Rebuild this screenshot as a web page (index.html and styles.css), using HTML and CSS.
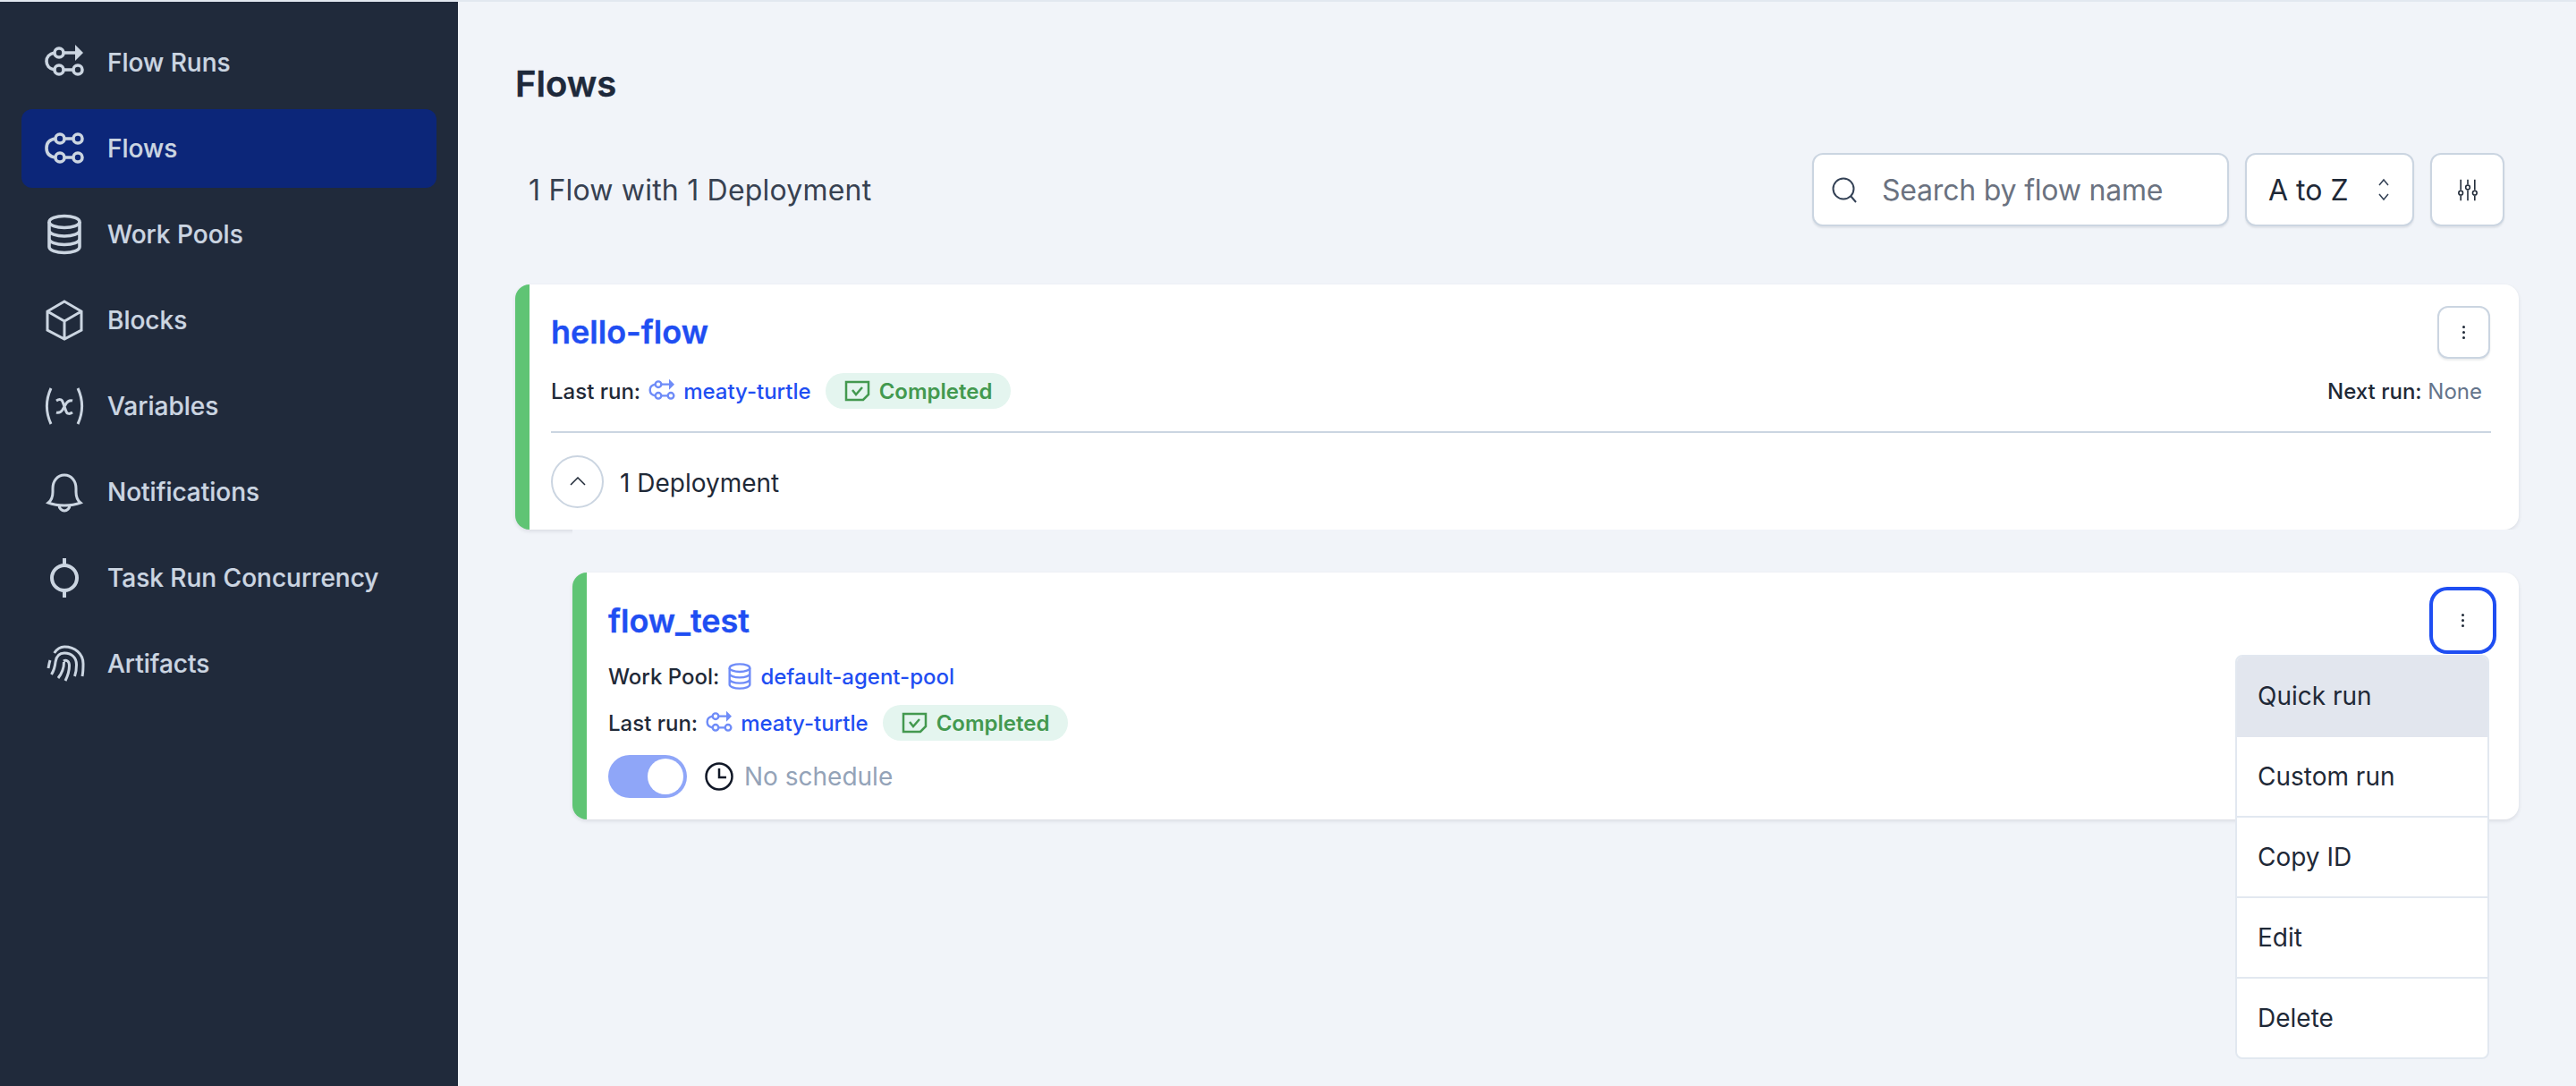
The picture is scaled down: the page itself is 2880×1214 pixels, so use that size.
FILE: index.html
```html
<!DOCTYPE html>
<html lang="en">
<head>
    <meta charset="UTF-8">
    <meta name="viewport" content="width=device-width, initial-scale=1.0">
    <title>Flows</title>
    <link rel="stylesheet" href="styles.css">
</head>
<body>
    <svg class="defs" width="0" height="0">
        <symbol id="i-flow-run" viewBox="0 0 48 48">
            <circle cx="18" cy="13" r="5"/><circle cx="18" cy="32" r="5"/><circle cx="39" cy="32" r="5"/>
            <path d="M23 32h11M23 13h15M13 13C7 14 4 18 4 22.500C4 27 7 31 13 32"/>
            <path class="solid" d="M36 4l9 9-9 9z"/>
        </symbol>
        <symbol id="i-flow" viewBox="0 0 48 48">
            <circle cx="19" cy="13" r="5"/><circle cx="39" cy="13" r="5"/><circle cx="19" cy="34" r="5"/><circle cx="39" cy="34" r="5"/>
            <path d="M24 13h10M24 34h10M14 13C7 14 4 18 4 23.500C4 29 7 33 14 34"/>
        </symbol>
        <symbol id="i-pool" viewBox="0 0 48 48">
            <ellipse cx="24" cy="10" rx="17" ry="6.500"/>
            <path d="M7 10v28c0 3.600 7.600 6.500 17 6.500s17-2.900 17-6.500V10M7 19.500c0 3.600 7.600 6.500 17 6.500s17-2.900 17-6.500M7 29c0 3.600 7.600 6.500 17 6.500s17-2.900 17-6.500"/>
        </symbol>
    </svg>

    <div class="app">
        <aside class="sidebar">
            <a class="nav-item"><svg class="nav-icon"><use href="#i-flow-run"/></svg>Flow Runs</a>
            <a class="nav-item active"><svg class="nav-icon"><use href="#i-flow"/></svg>Flows</a>
            <a class="nav-item"><svg class="nav-icon"><use href="#i-pool"/></svg>Work Pools</a>
            <a class="nav-item">
                <svg class="nav-icon" viewBox="0 0 48 48"><path d="M24 3l19 11v21L24 45 5 35V14zM5 14l19 11 19-11M24 25v20"/></svg>Blocks
            </a>
            <a class="nav-item">
                <svg class="nav-icon" viewBox="0 0 48 48"><path d="M9 4C3 17 3 31 9 44M39 4c6 13 6 27 0 40M15 18c3-2 6-2 7 1l4 11c1 3 4 3 7 1M33 18c-3-1-5 0-7 3l-4 7c-2 3-4 4-7 3"/></svg>Variables
            </a>
            <a class="nav-item">
                <svg class="nav-icon" viewBox="0 0 48 48"><path d="M6 36c4-3 5-7 5-12v-4c0-8 5-15 13-15s13 7 13 15v4c0 5 1 9 5 12-5 2-11 3-18 3s-13-1-18-3zM18 39c0 3 3 6 6 6s6-3 6-6"/></svg>Notifications
            </a>
            <a class="nav-item">
                <svg class="nav-icon" viewBox="0 0 48 48"><circle class="thick" cx="24" cy="24" r="14"/><path class="thick" d="M24 2v8M24 38v8"/></svg>Task Run Concurrency
            </a>
            <a class="nav-item">
                <svg class="nav-icon" viewBox="0 0 48 48"><path d="M12.700 12C16 7 20 5 24 5c12 0 21 8 21 19 0 5 0 9-1 14M8 20c-1 3-1.500 6-2 9M9.500 36c2.500-4 4-9 4.500-14 1-7 5-10 10-10 8 0 13.500 5 13.500 13 0 5-.5 9-2 13M17 40c4-5 6.500-10 6.500-18M23 21c3-2 6.500 0 6.500 5 0 6-1.500 11-4.500 17"/></svg>Artifacts
            </a>
        </aside>

        <main class="content">
            <h1 class="page-title">Flows</h1>

            <div class="toolbar">
                <div class="stats">1 Flow with 1 Deployment</div>
                <div class="search">
                    <svg class="search-icon" viewBox="0 0 28 28"><circle cx="13" cy="13" r="11.500"/><path d="M21 21l6 7"/></svg>
                    <span class="search-text">Search by flow name</span>
                </div>
                <div class="sort">
                    A to Z
                    <svg class="sort-icon" viewBox="0 0 16 28"><path d="M3 9l5-6 5 6M3 19l5 6 5-6"/></svg>
                </div>
                <button class="square-btn" type="button">
                    <svg class="filter-icon" viewBox="0 0 28 32"><path d="M4 1v15M4 24v7M14 1v7M14 16v15M24 1v15M24 24v7"/><circle cx="4" cy="20" r="3"/><circle cx="14" cy="12" r="3"/><circle cx="24" cy="20" r="3"/></svg>
                </button>
            </div>

            <section class="card flow-card">
                <div class="card-head">
                    <a class="card-title">hello-flow</a>
                    <button class="kebab" type="button"><span></span><span></span><span></span></button>
                </div>
                <div class="meta-row meta-split">
                    <div class="meta">
                        <span class="label">Last run:</span>
                        <svg class="meta-icon"><use href="#i-flow-run"/></svg>
                        <a class="link">meaty-turtle</a>
                        <span class="state">
                            <svg class="state-icon" viewBox="0 0 29 24"><path d="M2 2h25v14l-6 6H2zM9 11l4 5 7-8"/></svg>Completed
                        </span>
                    </div>
                    <div class="next-run"><span class="label">Next run:</span> <span class="none">None</span></div>
                </div>
                <div class="card-foot">
                    <button class="round-btn" type="button">
                        <svg class="chevron" viewBox="0 0 18 10"><path d="M1 9l8-8 8 8"/></svg>
                    </button>
                    <span class="deploy-count">1 Deployment</span>
                </div>
            </section>

            <div class="deployments">
                <section class="card deploy-card">
                    <div class="card-head deploy-head">
                        <a class="card-title">flow_test</a>
                        <button class="kebab focused" type="button"><span></span><span></span><span></span></button>
                    </div>
                    <div class="meta">
                        <span class="label">Work Pool:</span>
                        <svg class="meta-icon pool-small"><use href="#i-pool"/></svg>
                        <a class="link">default-agent-pool</a>
                    </div>
                    <div class="meta meta-second">
                        <span class="label">Last run:</span>
                        <svg class="meta-icon"><use href="#i-flow-run"/></svg>
                        <a class="link">meaty-turtle</a>
                        <span class="state">
                            <svg class="state-icon" viewBox="0 0 29 24"><path d="M2 2h25v14l-6 6H2zM9 11l4 5 7-8"/></svg>Completed
                        </span>
                    </div>
                    <div class="schedule">
                        <div class="toggle"><div class="knob"></div></div>
                        <svg class="clock" viewBox="0 0 32 32"><circle cx="16" cy="16" r="14.500"/><path d="M16 7v10h8"/></svg>
                        <span class="no-schedule">No schedule</span>
                    </div>

                    <ul class="menu">
                        <li class="menu-item hover">Quick run</li>
                        <li class="menu-item">Custom run</li>
                        <li class="menu-item">Copy ID</li>
                        <li class="menu-item">Edit</li>
                        <li class="menu-item">Delete</li>
                    </ul>
                </section>
            </div>
        </main>
    </div>
</body>
</html>
```
FILE: styles.css
```css
* {
    box-sizing: border-box;
}

html, body {
    height: 100%;
}

body {
    margin: 0;
    border-top: 2px solid #e2e8f0;
    background-color: #f1f4f9;
    color: #1f2937;
    font-family: Inter, 'Liberation Sans', sans-serif;
    overflow: hidden;
}

.defs {
    position: absolute;
}

symbol {
    fill: none;
    stroke: currentColor;
    stroke-width: 3.600;
}

symbol .solid {
    fill: currentColor;
    stroke: none;
}

.app {
    display: flex;
    height: 100%;
}

/* sidebar */
.sidebar {
    width: 512px;
    flex-shrink: 0;
    padding: 24px;
    display: flex;
    flex-direction: column;
    gap: 8px;
    background-color: #202a3b;
}

.nav-item {
    height: 88px;
    padding-left: 24px;
    display: flex;
    align-items: center;
    gap: 24px;
    border-radius: 12px;
    color: #cbd5e1;
    font-size: 28px;
    font-weight: 500;
    -webkit-text-stroke: 0.2px currentColor;
}

.nav-item.active {
    background-color: #0c2679;
}

.nav-icon {
    width: 48px;
    height: 48px;
    flex-shrink: 0;
    fill: none;
    stroke: currentColor;
    stroke-width: 3;
}

.nav-icon .thick {
    stroke-width: 4;
}

/* main */
.content {
    flex: 1;
    padding: 68px 64px 0;
}

.page-title {
    margin: 0;
    font-size: 40px;
    line-height: 48px;
    font-weight: 600;
    color: #1e293b;
    -webkit-text-stroke: 0.4px currentColor;
}

.toolbar {
    margin-top: 53px;
    padding: 0 16px 0 15px;
    display: flex;
    align-items: center;
    gap: 18px;
}

.stats {
    flex: 1;
    font-size: 32px;
    letter-spacing: 0.2px;
    color: #374151;
}

.search, .sort, .square-btn {
    height: 82px;
    display: flex;
    align-items: center;
    background-color: #ffffff;
    border: 2px solid #cbd5e1;
    border-radius: 12px;
    box-shadow: 0 2px 2px rgba(15, 23, 42, 0.08);
}

.search {
    width: 466px;
    padding-left: 20px;
    gap: 28px;
    font-size: 32px;
    color: #6b7280;
}

.search-text {
    letter-spacing: -0.2px;
}

.search-icon {
    width: 28px;
    height: 28px;
    overflow: visible;
    fill: none;
    stroke: #334155;
    stroke-width: 2;
}

.sort {
    width: 189px;
    padding: 0 24px;
    justify-content: space-between;
    font-size: 32px;
    color: #1f2937;
}

.sort-icon {
    width: 16px;
    height: 28px;
    fill: none;
    stroke: #334155;
    stroke-width: 1.500;
}

.square-btn {
    width: 83px;
    padding: 0;
    justify-content: center;
}

.filter-icon {
    width: 22px;
    height: 25px;
    fill: none;
    stroke: #1f2937;
    stroke-width: 2;
}

.card {
    position: relative;
    background-color: #ffffff;
    border-left: 16px solid #5fc474;
    border-radius: 16px;
    box-shadow: 0 2px 4px rgba(15, 23, 42, 0.1);
}

.flow-card {
    margin-top: 65px;
    height: 274px;
    padding: 24px 32px 0 24px;
}

.card-head {
    display: flex;
    justify-content: space-between;
    align-items: flex-start;
}

.card-title {
    margin-top: 7px;
    font-size: 36px;
    line-height: 44px;
    font-weight: 600;
    color: #1f4ef2;
    -webkit-text-stroke: 0.4px currentColor;
}

.kebab {
    width: 59px;
    height: 59px;
    padding: 0;
    display: flex;
    flex-direction: column;
    align-items: center;
    justify-content: center;
    gap: 3px;
    background-color: #ffffff;
    border: 2px solid #cbd5e1;
    border-radius: 12px;
    box-shadow: 0 2px 2px rgba(15, 23, 42, 0.08);
}

.kebab span {
    width: 3px;
    height: 3px;
    border-radius: 50%;
    background-color: #1f2937;
}

.kebab.focused {
    border-color: #ffffff;
    box-shadow: 0 0 0 4px #ffffff, 0 0 0 8px #1f4ef2;
}

.meta-row {
    margin-top: 16px;
}

.meta-split {
    display: flex;
    justify-content: space-between;
    align-items: center;
    padding-right: 10px;
    padding-bottom: 25px;
    border-bottom: 2px solid #cbd5e1;
    margin-right: -1px;
}

.meta {
    display: flex;
    align-items: center;
    height: 40px;
    font-size: 24px;
    font-weight: 500;
}

.label {
    color: #1f2937;
    font-size: 24px;
    font-weight: 500;
}

.meta-icon {
    width: 32px;
    height: 32px;
    margin: 0 8px;
    color: #6f8cf8;
}

.link {
    color: #1f4ef2;
}

.state {
    height: 40px;
    margin-left: 16px;
    padding: 0 21px;
    display: flex;
    align-items: center;
    gap: 10px;
    border-radius: 20px;
    background-color: #e4f5ef;
    color: #43994f;
    font-weight: 600;
}

.state-icon {
    width: 29px;
    height: 24px;
    fill: none;
    stroke: #43994f;
    stroke-width: 2.500;
}

.next-run {
    font-size: 24px;
}

.none {
    color: #64748b;
}

.card-foot {
    margin-top: 25px;
    display: flex;
    align-items: center;
    gap: 18px;
}

.round-btn {
    width: 59px;
    height: 59px;
    padding: 0;
    display: flex;
    align-items: center;
    justify-content: center;
    background-color: #ffffff;
    border: 2px solid #cbd5e1;
    border-radius: 50%;
}

.chevron {
    width: 18px;
    height: 10px;
    margin-top: -2px;
    fill: none;
    stroke: #1f2937;
    stroke-width: 1.500;
}

.deploy-count {
    padding-top: 3px;
    font-size: 28px;
}

/* sits over the bottom of the flow card shadow */
.deployments {
    position: relative;
    margin-left: 64px;
    padding-top: 48px;
    background-color: #f1f4f9;
}

.deploy-card {
    height: 276px;
    padding: 24px 0 0 24px;
}

.deploy-head {
    padding-right: 33px;
    height: 59px;
}

.deploy-card .card-title {
    margin-top: 8px;
}

.deploy-card .meta {
    margin-top: 13px;
}

.deploy-card .meta-second {
    margin-top: 12px;
}

.meta-icon.pool-small {
    margin: 0 7px;
}

.schedule {
    margin-top: 16px;
    display: flex;
    align-items: center;
}

.toggle {
    width: 88px;
    height: 48px;
    padding: 4px;
    display: flex;
    justify-content: flex-end;
    border-radius: 24px;
    background-color: #8fa6f8;
}

.knob {
    width: 40px;
    height: 40px;
    border-radius: 50%;
    background-color: #ffffff;
}

.clock {
    width: 32px;
    height: 32px;
    margin: 0 12px 0 20px;
    fill: none;
    stroke: #111827;
    stroke-width: 2.500;
}

.no-schedule {
    font-size: 28px;
    color: #94a3b8;
}

/* dropdown */
.menu {
    position: absolute;
    top: 92px;
    right: 33px;
    width: 284px;
    margin: 0;
    padding: 0;
    list-style: none;
    overflow: hidden;
    background-color: #ffffff;
    border: 2px solid #e2e8f0;
    border-radius: 8px;
    z-index: 2;
}

.menu-item {
    height: 90px;
    padding-left: 23px;
    display: flex;
    align-items: center;
    border-bottom: 2px solid #e2e8f0;
    font-size: 28px;
    color: #1f2937;
}

.menu-item:last-child {
    height: 88px;
    border-bottom: none;
}

.menu-item.hover {
    background-color: #e2e6ee;
    border-bottom-color: transparent;
}
```
